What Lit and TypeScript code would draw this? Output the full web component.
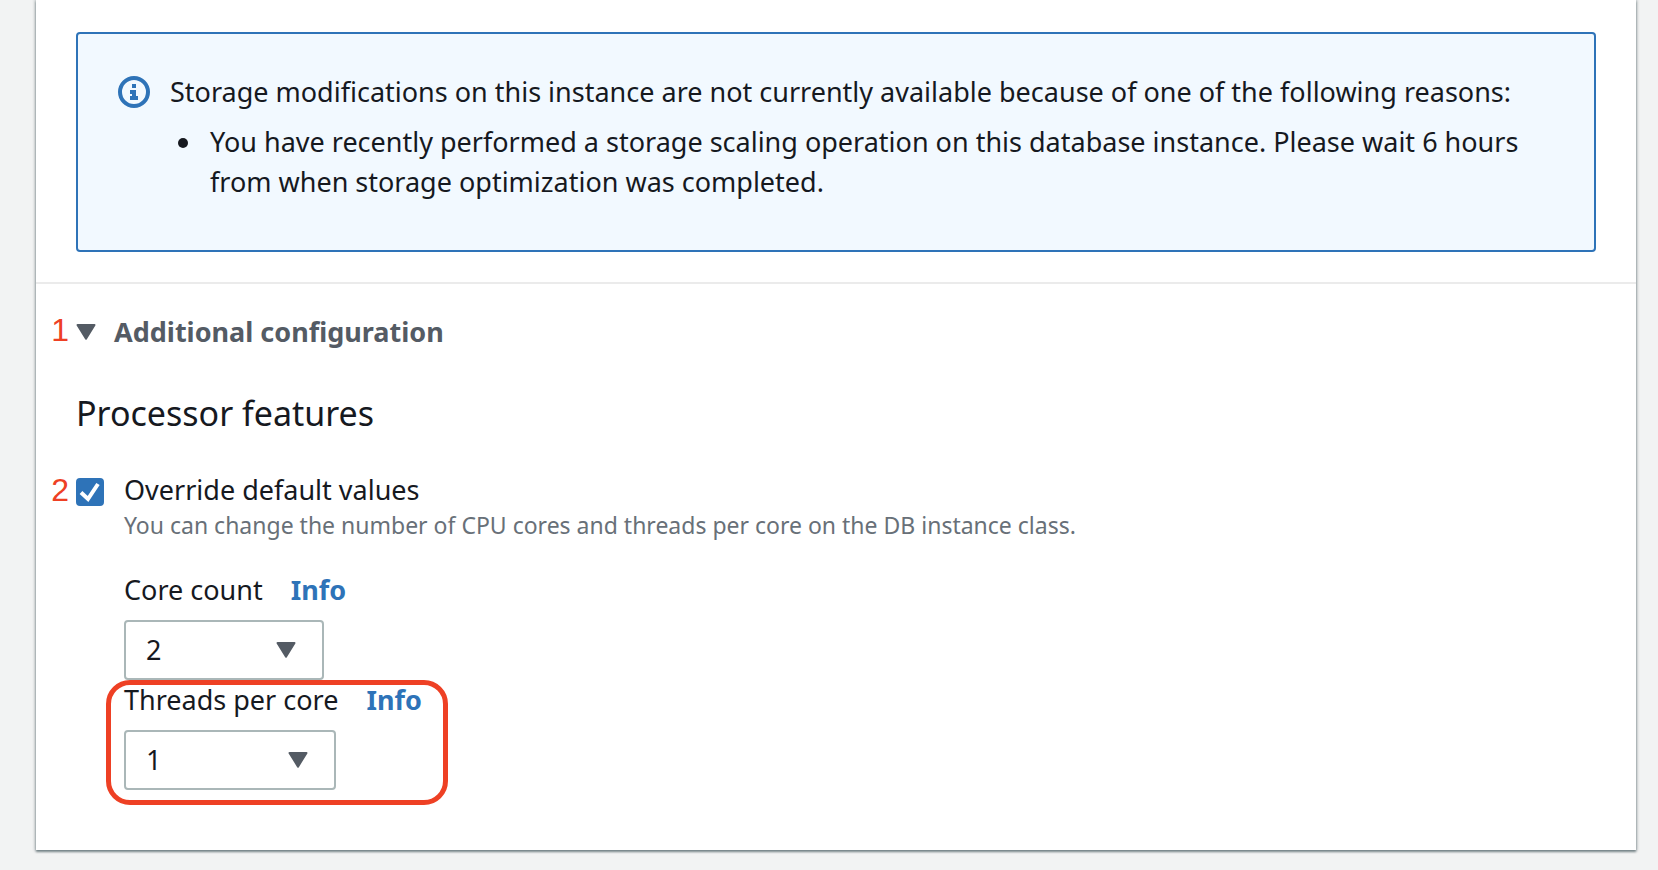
import { LitElement, html, css, svg } from "lit";
import { customElement, property, state } from "lit/decorators.js";

const caret = html`<svg class="caret" viewBox="0 0 20 16" width="20" height="16" aria-hidden="true">
  ${svg`<path d="M1.5 1h17L10 14.6z" fill="#545b64" stroke="#545b64" stroke-width="2" stroke-linejoin="round"/>`}
</svg>`;

@customElement("select-field")
class SelectField extends LitElement {
  @property() label = "";
  @property() value = "1";
  @property({ type: Array }) options: string[] = [];

  static styles = css`
    :host {
      display: block;
      width: fit-content;
    }
    .head {
      display: flex;
      align-items: baseline;
      gap: 28px;
      line-height: 40px;
      margin-bottom: 10px;
    }
    a {
      color: #2e73b8;
      font-weight: 700;
      text-decoration: none;
    }
    .control {
      position: relative;
      width: var(--control-width, 200px);
    }
    select {
      appearance: none;
      display: block;
      box-sizing: border-box;
      width: 100%;
      height: 60px;
      margin: 0;
      padding: 0 60px 0 20px;
      border: 2px solid #aab7b8;
      border-radius: 4px;
      background: #fff;
      color: #16191f;
      font: inherit;
    }
    .caret {
      position: absolute;
      right: 28px;
      top: 22px;
      pointer-events: none;
    }
  `;

  render() {
    return html`
      <div class="head">
        <label for="control">${this.label}</label>
        <a href="#info">Info</a>
      </div>
      <div class="control">
        <select id="control">
          ${this.options.map((o) => html`<option ?selected=${o === this.value}>${o}</option>`)}
        </select>
        ${caret}
      </div>
    `;
  }
}

@customElement("app-root")
class AppRoot extends LitElement {
  @state() private open = true;

  static styles = css`
    :host {
      display: block;
      box-sizing: border-box;
      min-height: 100vh;
      padding: 0 22px 20px 36px;
      background: #f2f3f3;
      color: #16191f;
      font-family: "Noto Sans", sans-serif;
      font-size: 27px;
      line-height: 40px;
    }
    .panel {
      background: #fff;
      box-shadow: 0 2px 2px rgba(0, 28, 36, 0.4), 0 0 3px 1px rgba(0, 28, 36, 0.28);
    }
    .notice {
      padding: 32px 40px 30px;
      border-bottom: 2px solid #ebebeb;
    }
    .alert {
      display: flex;
      gap: 20px;
      padding: 38px 40px 48px;
      border: 2px solid #2e73b8;
      border-radius: 4px;
      background: #f2f9ff;
    }
    .alert svg {
      flex: none;
      margin-top: 4px;
    }
    .alert p {
      margin: 0;
    }
    .alert ul {
      margin: 10px 0 0;
      padding-left: 8px;
      list-style: none;
    }
    .alert li {
      display: flex;
      gap: 22px;
    }
    .alert li::before {
      content: "";
      flex: none;
      width: 10px;
      height: 10px;
      margin-top: 16px;
      border-radius: 50%;
      background: #16191f;
    }
    .config {
      padding: 28px 40px 60px;
    }
    .row {
      position: relative;
      width: fit-content;
    }
    .toggle {
      display: flex;
      align-items: center;
      gap: 18px;
      margin: 0;
      padding: 0;
      border: 0;
      background: none;
      color: #545b64;
      font: inherit;
      font-weight: 700;
    }
    .closed .caret {
      transform: rotate(-90deg);
    }
    h2 {
      margin: 39px 0 37px;
      font-size: 34px;
      font-weight: 400;
      line-height: 44px;
    }
    .option {
      display: grid;
      grid-template-columns: 28px auto;
      column-gap: 20px;
      line-height: 36px;
    }
    .tick {
      position: relative;
      align-self: end;
      height: 28px;
      margin-bottom: 2px;
    }
    .tick input {
      appearance: none;
      display: block;
      width: 28px;
      height: 28px;
      margin: 0;
      box-sizing: border-box;
      border: 2px solid #aab7b8;
      border-radius: 4px;
    }
    .tick input:checked {
      border-color: #2e73b8;
      background: #2e73b8;
    }
    .tick svg {
      position: absolute;
      inset: 0;
      pointer-events: none;
    }
    .hint {
      grid-column: 2;
      margin: 1px 0 0;
      color: #687078;
      font-size: 23px;
      line-height: 32px;
    }
    .fields {
      margin: 29px 0 0 48px;
    }
    .threads {
      --control-width: 212px;
    }
    .mark {
      position: absolute;
      right: 100%;
      top: 0;
      margin-right: 7px;
      color: #ee4024;
      font-family: "Liberation Sans", Arial, sans-serif;
      font-size: 32px;
      line-height: 36px;
    }
    .outline {
      position: absolute;
      inset: 0 -26px -15px -18px;
      border: 5px solid #ee4024;
      border-radius: 24px;
      pointer-events: none;
    }
  `;

  render() {
    return html`
      <main class="panel">
        <section class="notice">
          <div class="alert" role="status">
            <svg viewBox="0 0 32 32" width="32" height="32" aria-hidden="true">
              <circle cx="16" cy="16" r="14" fill="none" stroke="#2e73b8" stroke-width="4" />
              <path d="M14 8h4v4h-4zM12 14h6v6h2v4h-8v-4h2v-2h-2z" fill="#2e73b8" />
            </svg>
            <div>
              <p>Storage modifications on this instance are not currently available because of one of the following reasons:</p>
              <ul>
                <li>You have recently performed a storage scaling operation on this database instance. Please wait 6 hours from when storage optimization was completed.</li>
              </ul>
            </div>
          </div>
        </section>
        <section class="config">
          <div class="row">
            <span class="mark">1</span>
            <button
              class="toggle ${this.open ? "" : "closed"}"
              aria-expanded=${this.open}
              @click=${() => (this.open = !this.open)}
            >
              ${caret}Additional configuration
            </button>
          </div>
          <div ?hidden=${!this.open}>
            <h2>Processor features</h2>
            <div class="row option">
              <span class="mark">2</span>
              <span class="tick">
                <input id="override" type="checkbox" checked aria-describedby="override-hint" />
                <svg viewBox="0 0 28 28" width="28" height="28" aria-hidden="true">
                  <path d="M5 14.5l7 6.5L22 6" fill="none" stroke="#fff" stroke-width="4" />
                </svg>
              </span>
              <label for="override">Override default values</label>
              <p class="hint" id="override-hint">You can change the number of CPU cores and threads per core on the DB instance class.</p>
            </div>
            <div class="fields">
              <select-field label="Core count" value="2" .options=${["1", "2"]}></select-field>
              <div class="row threads">
                <select-field label="Threads per core" value="1" .options=${["1", "2"]}></select-field>
                <span class="outline"></span>
              </div>
            </div>
          </div>
        </section>
      </main>
    `;
  }
}
